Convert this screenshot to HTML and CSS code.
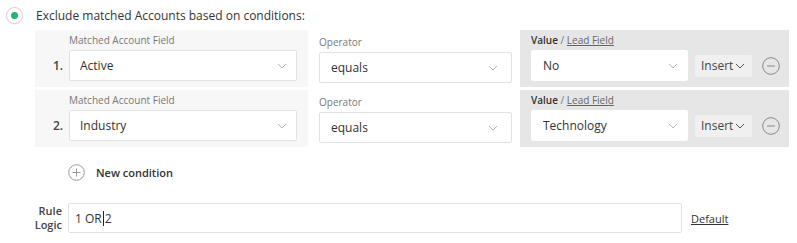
FILE: index.html
```html
<!DOCTYPE html>
<html>
  <head>
    <link rel="stylesheet" href="styles.css">
  </head>
  <body>
    <section class="rule">
      <div class="rule-head">
        <span class="radio"><span class="radio-dot"></span></span>
        <span class="rule-title">Exclude matched Accounts based on conditions:</span>
      </div>

      <div class="conditions">
        <div class="condition">
          <div class="field-col">
            <span class="num">1.</span>
            <div class="field">
              <label class="cap">Matched Account Field</label>
              <div class="select select--field">
                <span>Active</span>
                <svg class="chev" width="10" height="6" viewBox="0 0 10 6"><polyline points="1,1 5,5 9,1"/></svg>
              </div>
            </div>
          </div>
          <div class="op-col">
            <label class="cap">Operator</label>
            <div class="select select--op">
              <span>equals</span>
              <svg class="chev" width="10" height="6" viewBox="0 0 10 6"><polyline points="1,1 5,5 9,1"/></svg>
            </div>
          </div>
          <div class="value-col">
            <label class="cap"><b>Value</b> / <a href="#">Lead Field</a></label>
            <div class="value-row">
              <div class="select select--value">
                <span>No</span>
                <svg class="chev" width="10" height="6" viewBox="0 0 10 6"><polyline points="1,1 5,5 9,1"/></svg>
              </div>
              <button class="insert">Insert <svg class="chev chev--dark" width="10" height="6" viewBox="0 0 10 6"><polyline points="1,1 5,5 9,1"/></svg></button>
              <svg class="remove" width="18" height="18" viewBox="0 0 18 18"><circle cx="9" cy="9" r="8.3"/><line x1="5" y1="9" x2="13" y2="9"/></svg>
            </div>
          </div>
        </div>

        <div class="condition">
          <div class="field-col">
            <span class="num">2.</span>
            <div class="field">
              <label class="cap">Matched Account Field</label>
              <div class="select select--field">
                <span>Industry</span>
                <svg class="chev" width="10" height="6" viewBox="0 0 10 6"><polyline points="1,1 5,5 9,1"/></svg>
              </div>
            </div>
          </div>
          <div class="op-col">
            <label class="cap">Operator</label>
            <div class="select select--op">
              <span>equals</span>
              <svg class="chev" width="10" height="6" viewBox="0 0 10 6"><polyline points="1,1 5,5 9,1"/></svg>
            </div>
          </div>
          <div class="value-col">
            <label class="cap"><b>Value</b> / <a href="#">Lead Field</a></label>
            <div class="value-row">
              <div class="select select--value">
                <span>Technology</span>
                <svg class="chev" width="10" height="6" viewBox="0 0 10 6"><polyline points="1,1 5,5 9,1"/></svg>
              </div>
              <button class="insert">Insert <svg class="chev chev--dark" width="10" height="6" viewBox="0 0 10 6"><polyline points="1,1 5,5 9,1"/></svg></button>
              <svg class="remove" width="18" height="18" viewBox="0 0 18 18"><circle cx="9" cy="9" r="8.3"/><line x1="5" y1="9" x2="13" y2="9"/></svg>
            </div>
          </div>
        </div>
      </div>

      <div class="new-condition">
        <svg class="add" width="17" height="17" viewBox="0 0 17 17"><circle cx="8.5" cy="8.5" r="7.8"/><line x1="4.5" y1="8.5" x2="12.5" y2="8.5"/><line x1="8.5" y1="4.5" x2="8.5" y2="12.5"/></svg>
        <span>New condition</span>
      </div>

      <div class="rule-logic">
        <label class="logic-label">Rule<br>Logic</label>
        <div class="logic-input"><span>1 OR</span><span class="caret"></span><span>2</span></div>
        <a class="default" href="#">Default</a>
      </div>
    </section>
  </body>
</html>
```

FILE: styles.css
```css
body {
  margin: 0;
  font-family: "Open Sans", "DejaVu Sans", sans-serif;
  color: #333;
  background: #fff;
}

.rule { padding-top: 5px; }

.rule-head {
  display: flex;
  align-items: center;
  height: 20px;
  padding-left: 6px;
}
.radio {
  box-sizing: border-box;
  width: 17px;
  height: 17px;
  border: 1px solid #cfcfcf;
  border-radius: 50%;
  display: flex;
  align-items: center;
  justify-content: center;
  box-shadow: 0 1px 1px rgba(0,0,0,0.06);
}
.radio-dot {
  width: 7px;
  height: 7px;
  border-radius: 50%;
  background: #27b36a;
}
.rule-title {
  margin-left: 13px;
  font-size: 12px;
  color: #333;
}

.conditions {
  margin: 5px 0 0 35px;
  display: flex;
  flex-direction: column;
  gap: 3px;
}
.condition {
  display: flex;
  height: 57px;
}

.cap {
  display: block;
  height: 14px;
  line-height: 14px;
  margin-bottom: 3px;
  font-size: 10px;
  color: #777;
}
.cap b { color: #333; font-weight: 600; }
.cap a { color: #666; }

.field-col {
  width: 273px;
  background: #f7f7f7;
  display: flex;
  box-sizing: border-box;
  padding-top: 3px;
}
.num {
  width: 34px;
  box-sizing: border-box;
  padding-left: 18px;
  padding-top: 17px;
  line-height: 31px;
  font-size: 12px;
  font-weight: 600;
  color: #444;
}

.select {
  box-sizing: border-box;
  height: 31px;
  background: #fff;
  border: 1px solid #e2e2e2;
  border-radius: 2px;
  display: flex;
  align-items: center;
  justify-content: space-between;
  padding: 0 9px 0 11px;
  font-size: 12px;
  color: #333;
}
.select--field { width: 228px; padding-left: 10px; }
.select--op { width: 193px; padding-right: 13px; }
.select--value { width: 157px; border-color: #fff; }

.chev { fill: none; stroke: #b5b5b5; stroke-width: 1; }
.chev--dark { stroke: #555; margin-left: 2px; }

.op-col {
  width: 212px;
  box-sizing: border-box;
  padding: 5px 0 0 11px;
}

.value-col {
  width: 269px;
  background: #e6e6e6;
  box-sizing: border-box;
  padding: 3px 0 0 11px;
}
.value-row {
  display: flex;
  align-items: center;
}
.insert {
  margin-left: 7px;
  height: 22px;
  width: 57px;
  border: none;
  border-radius: 2px;
  background: #f0f0f0;
  font-family: inherit;
  font-size: 12px;
  color: #444;
  padding: 0 0 0 6px;
  display: flex;
  align-items: center;
}
.remove {
  margin-left: 10px;
  fill: none;
  stroke: #888;
  stroke-width: 1;
}

.new-condition {
  display: flex;
  align-items: center;
  height: 17px;
  margin: 17px 0 0 68px;
  font-size: 11px;
  font-weight: 600;
  color: #333;
}
.add { fill: none; stroke: #999; stroke-width: 1; }
.new-condition span { margin-left: 11px; }

.rule-logic {
  display: flex;
  align-items: center;
  margin-top: 22px;
}
.logic-label {
  width: 62px;
  text-align: right;
  font-size: 11px;
  font-weight: 600;
  line-height: 14px;
  color: #444;
}
.logic-input {
  margin-left: 6px;
  box-sizing: border-box;
  width: 614px;
  height: 30px;
  border: 1px solid #e2e2e2;
  border-radius: 2px;
  display: flex;
  align-items: center;
  padding-left: 6px;
  font-size: 12px;
  color: #333;
}
.caret {
  display: inline-block;
  width: 1px;
  height: 15px;
  background: #222;
  margin: 0 1px;
}
.default {
  margin-left: 9px;
  font-size: 11px;
  color: #333;
}
```
